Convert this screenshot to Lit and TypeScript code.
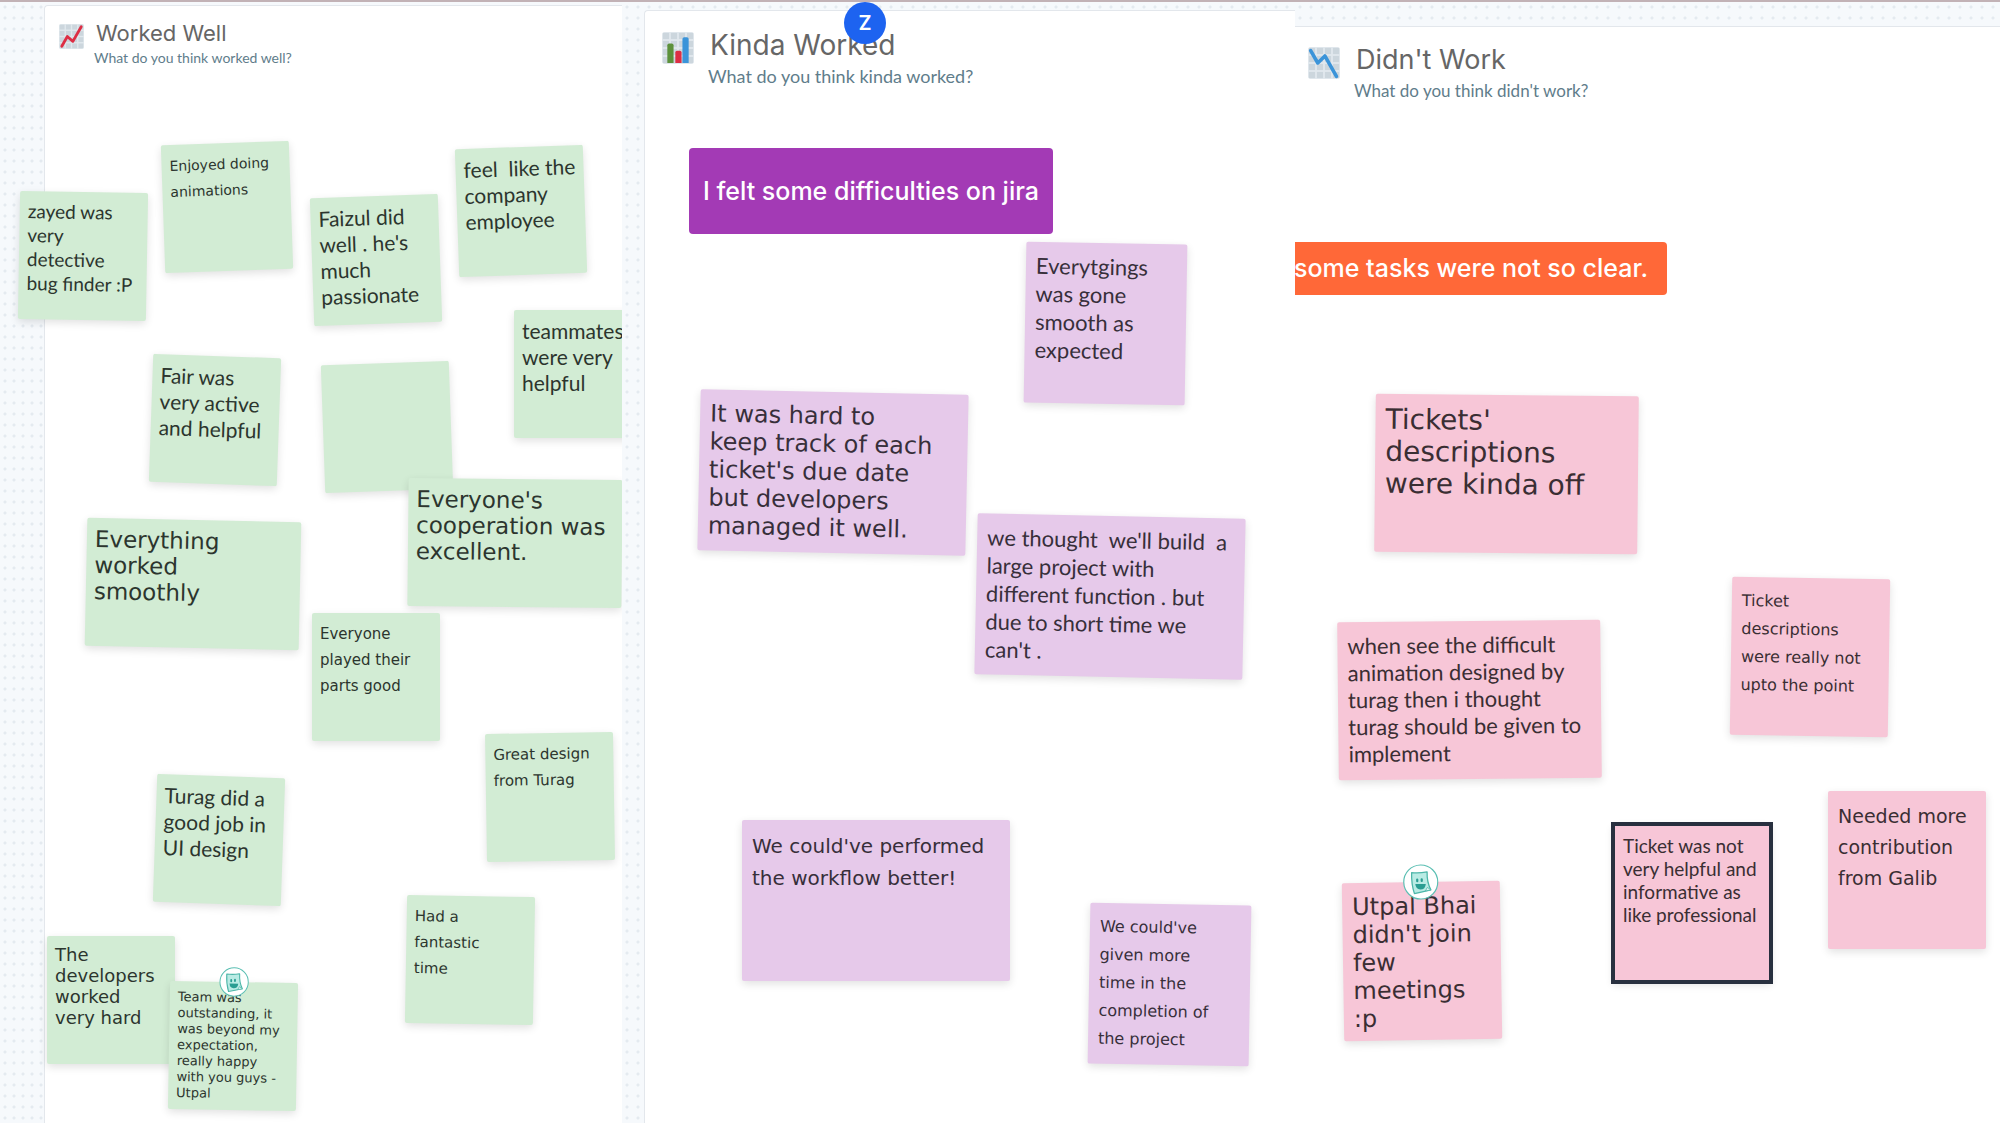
import { LitElement, html, css, svg, nothing } from "lit";
import { customElement, property } from "lit/decorators.js";
import { classMap } from "lit/directives/class-map.js";
import { styleMap } from "lit/directives/style-map.js";

type Hand = "print" | "round" | "script";
type IconName = "up" | "bars" | "down";

interface Note {
  text: string;
  x: number;
  y: number;
  turn: number;
  hand: Hand;
  size: number;
  leading: number;
  wide?: boolean;
  selected?: boolean;
  sticker?: boolean;
}

interface Label {
  text: string;
  x: number;
  y: number;
  tone: "violet" | "orange";
}

interface Column {
  id: string;
  title: string;
  prompt: string;
  icon: IconName;
  notes: Note[];
  labels: Label[];
  cursor?: string;
}

/* x and y are the top left corner of the note before it is turned. */
const columns: Column[] = [
  {
    id: "well",
    title: "Worked Well",
    prompt: "What do you think worked well?",
    icon: "up",
    labels: [],
    notes: [
      { text: "zayed was\nvery\ndetective\nbug finder :P", x: 19, y: 192, turn: 1, hand: "print", size: 19, leading: 24 },
      { text: "Enjoyed doing\nanimations", x: 163, y: 143, turn: -2, hand: "script", size: 14, leading: 26 },
      { text: "Faizul did\nwell . he's\nmuch\npassionate", x: 312, y: 196, turn: -2, hand: "print", size: 21, leading: 26 },
      { text: "feel  like the\ncompany\nemployee", x: 457, y: 147, turn: -2, hand: "print", size: 21, leading: 26 },
      { text: "teammates\nwere very\nhelpful", x: 514, y: 310, turn: 0, hand: "print", size: 21, leading: 26 },
      { text: "Fair was\nvery active\nand helpful", x: 151, y: 356, turn: 2, hand: "print", size: 21, leading: 26 },
      { text: "", x: 323, y: 363, turn: -2, hand: "print", size: 21, leading: 26 },
      { text: "Everyone's\ncooperation was\nexcellent.", x: 408, y: 479, turn: 0.6, hand: "round", size: 23, leading: 26, wide: true },
      { text: "Everything\nworked\nsmoothly", x: 86, y: 520, turn: 1.2, hand: "round", size: 23, leading: 26, wide: true },
      { text: "Everyone\nplayed their\nparts good", x: 312, y: 613, turn: 0, hand: "script", size: 15, leading: 26 },
      { text: "Great design\nfrom Turag", x: 486, y: 733, turn: -0.9, hand: "script", size: 15, leading: 26 },
      { text: "Turag did a\ngood job in\nUI design", x: 155, y: 776, turn: 2, hand: "print", size: 21, leading: 26 },
      { text: "The\ndevelopers\nworked\nvery hard", x: 47, y: 936, turn: 0, hand: "round", size: 18, leading: 21 },
      { text: "Team was\noutstanding, it\nwas beyond my\nexpectation,\nreally happy\nwith you guys -\nUtpal", x: 169, y: 982, turn: 1, hand: "round", size: 13, leading: 16, sticker: true },
      { text: "Had a\nfantastic\ntime", x: 406, y: 896, turn: 1, hand: "script", size: 15, leading: 26 },
    ],
  },
  {
    id: "kinda",
    title: "Kinda Worked",
    prompt: "What do you think kinda worked?",
    icon: "bars",
    cursor: "Z",
    labels: [{ text: "I felt some difficulties on jira", x: 67, y: 148, tone: "violet" }],
    notes: [
      { text: "Everytgings\nwas gone\nsmooth as\nexpected", x: 403, y: 243, turn: 1, hand: "print", size: 22, leading: 28 },
      { text: "It was hard to\nkeep track of each\nticket's due date\nbut developers\nmanaged it well.", x: 77, y: 392, turn: 1.2, hand: "round", size: 24, leading: 28, wide: true },
      { text: "we thought  we'll build  a\nlarge project with\ndifferent function . but\ndue to short time we\ncan't .", x: 354, y: 516, turn: 1.2, hand: "print", size: 22, leading: 28, wide: true },
      { text: "We could've performed\nthe workflow better!", x: 120, y: 820, turn: 0, hand: "script", size: 20, leading: 32, wide: true },
      { text: "We could've\ngiven more\ntime in the\ncompletion of\nthe project", x: 467, y: 904, turn: 1, hand: "script", size: 16, leading: 28 },
    ],
  },
  {
    id: "not",
    title: "Didn't Work",
    prompt: "What do you think didn't work?",
    icon: "down",
    labels: [{ text: "some tasks were not so clear.", x: -20, y: 242, tone: "orange" }],
    notes: [
      { text: "Tickets'\ndescriptions\nwere kinda off", x: 80, y: 395, turn: 0.6, hand: "round", size: 28, leading: 32, wide: true },
      { text: "when see the difficult\nanimation designed by\nturag then i thought\nturag should be given to\nimplement", x: 43, y: 621, turn: -0.6, hand: "print", size: 22, leading: 27, wide: true },
      { text: "Ticket\ndescriptions\nwere really not\nupto the point", x: 436, y: 578, turn: 0.9, hand: "script", size: 16, leading: 28 },
      { text: "Needed more\ncontribution\nfrom Galib", x: 533, y: 791, turn: 0, hand: "script", size: 19, leading: 31 },
      { text: "Ticket was not\nvery helpful and\ninformative as\nlike professional", x: 318, y: 824, turn: 0, hand: "print", size: 19, leading: 23, selected: true },
      { text: "Utpal Bhai\ndidn't join\nfew\nmeetings\n:p", x: 48, y: 882, turn: -0.9, hand: "round", size: 24, leading: 28, sticker: true },
    ],
  },
];

const gridCells = [2, 11, 20, 29].flatMap((cy) => [2, 11, 20, 29].map((cx) => svg`
  <rect x=${cx - 1} y=${cy - 1} width="7" height="7" fill="#ccd6dd"></rect>`));

const iconMarks = {
  up: svg`<path d="M4 32 L12 18 L20 25 L32 4" fill="none" stroke="#dd2e44" stroke-width="4" stroke-linecap="round" stroke-linejoin="round"></path>`,
  down: svg`<path d="M3 4 L11 18 L19 10 L32 33" fill="none" stroke="#3b94d9" stroke-width="4" stroke-linecap="round" stroke-linejoin="round"></path>`,
  bars: svg`
    <path d="M6 35 V15 a2 2 0 0 1 2-2 h3 a2 2 0 0 1 2 2 V35 z" fill="#5c913b"></path>
    <path d="M15 35 V23 a2 2 0 0 1 2-2 h3 a2 2 0 0 1 2 2 V35 z" fill="#dd2e44"></path>
    <path d="M23 35 V8 a2 2 0 0 1 2-2 h3 a2 2 0 0 1 2 2 V35 z" fill="#3b94d9"></path>`,
};

@customElement("chart-icon")
class ChartIcon extends LitElement {
  @property() name: IconName = "up";

  static styles = css`
    :host { display: block; }
    .icon { display: block; width: 100%; height: 100%; }
  `;

  render() {
    return html`<svg class="icon" viewBox="0 0 36 36" aria-hidden="true">
      <rect width="36" height="36" rx="3" fill="#e1e8ed"></rect>
      ${gridCells}${iconMarks[this.name]}
    </svg>`;
  }
}

@customElement("sticker-badge")
class StickerBadge extends LitElement {
  static styles = css`
    :host { display: block; }
    .icon { display: block; width: 100%; height: 100%; }
  `;

  render() {
    return html`<svg class="icon" viewBox="0 0 36 36" aria-hidden="true">
      <circle cx="18" cy="18" r="17" fill="#fff" stroke="#5bbfb3" stroke-width="1.2"></circle>
      <path d="M9 8.5 Q16 9.5 24.5 8 Q24 18 28 26 Q19 28 11.5 29.5 Q8.5 20 9 8.5 Z" fill="#b9ebe4" stroke="#4db6a9" stroke-width="1.3" stroke-linejoin="round"></path>
      <path d="M24.5 23.5 L28 26 L22.5 27 Z" fill="#e4f8f5" stroke="#4db6a9" stroke-width=".8"></path>
      <path d="M14.5 15.5 v1.6 M19 15.3 v1.6" stroke="#2a9d92" stroke-width="2.2" stroke-linecap="round"></path>
      <path d="M12.5 20 H23 Q22.5 25.5 17.5 25.5 Q13 25.5 12.5 20 Z" fill="#2a9d92"></path>
    </svg>`;
  }
}

@customElement("sticky-note")
class StickyNote extends LitElement {
  @property({ attribute: false }) note!: Note;

  static styles = css`
    :host { display: block; }
    .note {
      position: relative;
      box-sizing: border-box;
      width: var(--note);
      height: var(--note);
      padding: var(--note-pad);
      border-radius: 2px;
      background: var(--paper);
      color: var(--ink);
      box-shadow: 0 3px 8px rgba(0, 0, 0, 0.12);
    }
    .wide { width: var(--note-wide); }
    .selected { outline: 4px solid #28303f; outline-offset: -2px; border-radius: 0; }
    .text { margin: 0; white-space: pre; }
    .print { font-family: Lato, "Open Sans", sans-serif; }
    .round { font-family: "DejaVu Sans", Inter, sans-serif; }
    .script { font-family: "DejaVu Sans", Inter, sans-serif; }
    .sticker {
      position: absolute;
      left: 50%;
      top: 0;
      width: var(--sticker);
      height: var(--sticker);
      transform: translate(-50%, -50%);
    }
  `;

  render() {
    const n = this.note;
    return html`<article class=${classMap({ note: true, wide: !!n.wide, selected: !!n.selected })}>
      <p
        class=${classMap({ text: true, [n.hand]: true })}
        style=${styleMap({ fontSize: `${n.size}px`, lineHeight: `${n.leading}px` })}
      >${n.text}</p>
      ${n.sticker ? html`<sticker-badge class="sticker"></sticker-badge>` : nothing}
    </article>`;
  }
}

@customElement("app-root")
class AppRoot extends LitElement {
  static styles = css`
    :host { display: block; font-family: Inter, "Liberation Sans", sans-serif; }
    .board {
      box-sizing: border-box;
      display: grid;
      grid-template-columns: 622fr 673fr 705fr;
      min-height: 100vh;
      border-top: 2px solid #c2b2b6;
      overflow: hidden;
    }
    .column {
      position: relative;
      display: flex;
      overflow: hidden;
      background: radial-gradient(circle at 5px 5px, #e4eaf0 1px, transparent 2px) 0 0 / 11px 11px #f6f9fc;
    }
    .panel {
      flex: 1;
      display: flex;
      align-items: flex-start;
      background: #fff;
      border: 0 solid #e3e7ec;
      border-top-width: 1px;
    }
    .well { --note: 128px; --note-wide: 214px; --note-pad: 8px; --paper: #d2ecd4; --ink: #2c352e; --sticker: 30px; background-size: 9px 11px; padding: 3px 0 0 44px; }
    .kinda { --note: 161px; --note-wide: 268px; --note-pad: 10px; --paper: #e6c9ea; --ink: #372f3a; --sticker: 36px; padding: 8px 0 0 22px; }
    .not { --note: 158px; --note-wide: 263px; --note-pad: 10px; --paper: #f7c6d7; --ink: #3a2e33; --sticker: 36px; padding: 24px 0 0; }
    .well .panel { gap: 10px; padding: 14px; border-left-width: 1px; border-top-left-radius: 4px; }
    .kinda .panel { gap: 14px; padding: 17px; border-left-width: 1px; border-top-left-radius: 4px; }
    .not .panel { gap: 14px; padding: 16px 13px; }
    .icon { width: 32px; height: 32px; margin-top: 4px; }
    .well .icon { width: 25px; height: 25px; }
    .title { margin: 0 0 0 2px; font-size: 27px; line-height: 34px; font-weight: 400; color: #666; }
    .prompt { margin: 0; font-family: Lato, sans-serif; font-size: 18px; line-height: 28px; color: #5f7d8b; }
    .well .title { font-size: 22px; line-height: 26px; }
    .well .prompt { font-size: 14px; line-height: 24px; }
    .kinda .title { font-size: 28px; }
    .not .prompt { font-size: 17px; }
    .pin { position: absolute; }
    .label {
      box-sizing: border-box;
      margin: 0;
      padding: 0 14px;
      border-radius: 4px;
      color: #fff;
      font-size: 25px;
      font-weight: 500;
      white-space: nowrap;
    }
    .violet { background: #a33ab5; line-height: 86px; }
    .orange { background: #ff6838; line-height: 53px; padding: 0 19px; }
    .cursor {
      position: absolute;
      left: 222px;
      top: 0;
      width: 42px;
      height: 42px;
      border-radius: 50%;
      background: #1d63f0;
      color: #fff;
      font-size: 20px;
      font-weight: 600;
      line-height: 42px;
      text-align: center;
    }
  `;

  private renderColumn(c: Column) {
    return html`<section class="column ${c.id}" aria-label=${c.title}>
      <div class="panel">
        <chart-icon class="icon" name=${c.icon}></chart-icon>
        <header>
          <h2 class="title">${c.title}</h2>
          <p class="prompt">${c.prompt}</p>
        </header>
      </div>
      ${c.labels.map((l) => html`<p
        class="pin label ${l.tone}"
        style=${styleMap({ left: `${l.x}px`, top: `${l.y - 2}px` })}
      >${l.text}</p>`)}
      ${c.notes.map((n) => html`<sticky-note
        class="pin"
        style=${styleMap({ left: `${n.x}px`, top: `${n.y - 2}px`, transform: n.turn ? `rotate(${n.turn}deg)` : "none" })}
        .note=${n}
      ></sticky-note>`)}
      ${c.cursor ? html`<span class="cursor">${c.cursor}</span>` : nothing}
    </section>`;
  }

  render() {
    return html`<main class="board">${columns.map((c) => this.renderColumn(c))}</main>`;
  }
}
